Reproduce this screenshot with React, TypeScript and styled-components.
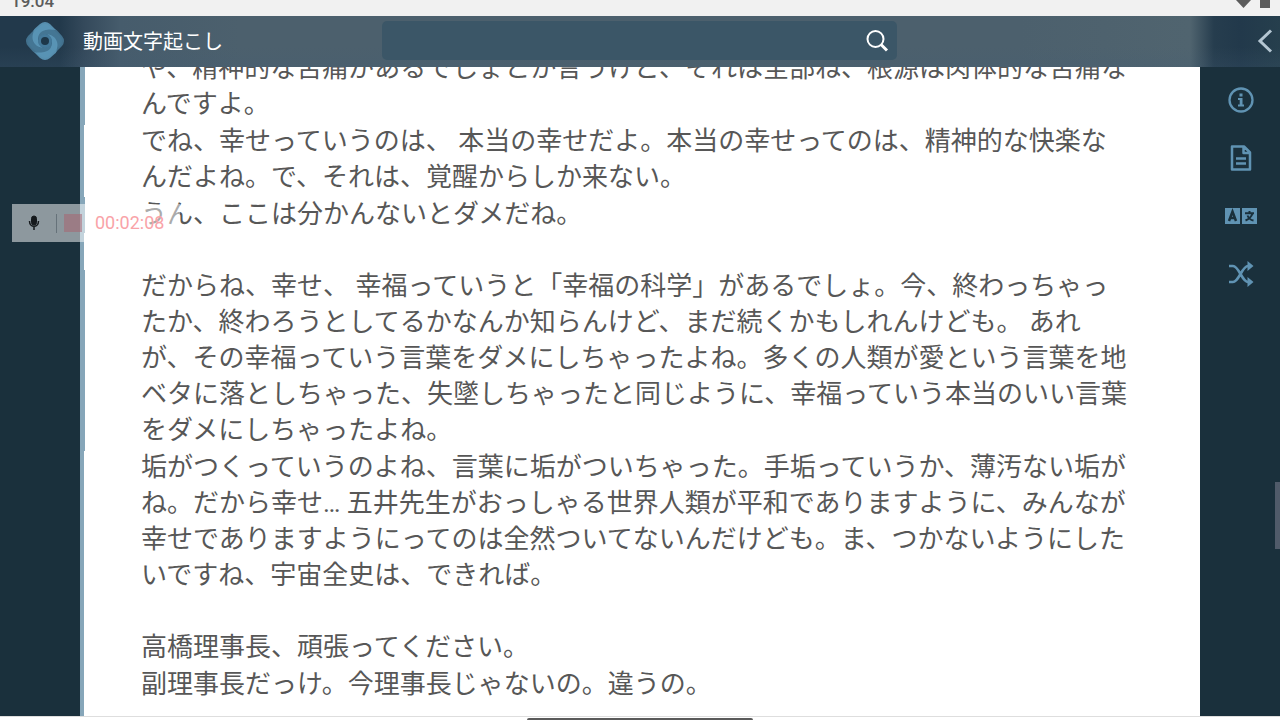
import React from "react";
import styled, { createGlobalStyle } from "styled-components";

const jp = '"Noto Sans CJK JP", "Noto Sans", sans-serif';

const GlobalStyle = createGlobalStyle`
  *, *::before, *::after { box-sizing: border-box; }
  body { margin: 0; background: #1a303c; font-family: ${jp}; }
`;

const Screen = styled.div`
  position: relative;
  display: flex;
  flex-direction: column;
  height: 100vh;
  overflow: hidden;
`;

const StatusBar = styled.div`
  display: flex;
  justify-content: space-between;
  align-items: flex-end;
  flex: none;
  height: 16px;
  padding: 0 10px 8px 11px;
  background: #f1f1f1;
  color: #5c5c5c;
  font: 500 17px/18px Roboto, sans-serif;
  overflow: hidden;
`;

const Clock = styled.time`
  margin-bottom: -2px;
`;

const StatusIcons = styled.svg`
  display: block;
  width: 36px;
  height: 8px;
`;

const Header = styled.header`
  display: grid;
  grid-template-columns: 382px minmax(0, 515px) 1fr;
  align-items: center;
  flex: none;
  height: 51px;
  padding-bottom: 2px;
  background:
    linear-gradient(180deg, transparent 60%, rgba(66, 92, 116, 0.2)),
    linear-gradient(90deg, #22394b 0, #22394b 60px, #34495b 84px, #465c6c 120px, #4c606d 240px,
      #4c606d calc(100% - 260px), #50646f calc(100% - 90px), #263d4e calc(100% - 66px), #22394b calc(100% - 40px), #263f4d 100%);
`;

const Brand = styled.a`
  display: flex;
  align-items: center;
  gap: 18px;
  padding-left: 25px;
  color: #fff;
  font-size: 20px;
  line-height: 30px;
  text-decoration: none;
`;

const Logo = styled.svg`
  width: 40px;
  height: 40px;
`;

const Search = styled.form`
  display: flex;
  align-items: center;
  height: 39px;
  padding-right: 8px;
  border-radius: 5px;
  background: #3b5667;
`;

const SearchInput = styled.input`
  flex: 1;
  min-width: 0;
  height: 100%;
  padding: 0 12px;
  border: 0;
  outline: 0;
  background: transparent;
  color: #fff;
  font: 18px ${jp};
`;

const IconButton = styled.button`
  display: grid;
  place-items: center;
  padding: 0;
  border: 0;
  background: transparent;
  color: ${(p) => p.color ?? "#6093b3"};
  cursor: pointer;
  svg { display: block; }
`;

const HeaderEnd = styled.div`
  display: flex;
  justify-content: flex-end;
  padding-right: 7px;
`;

const Body = styled.div`
  display: grid;
  grid-template-columns: 80px minmax(0, 1fr) 80px;
  flex: 1;
  min-height: 0;
  background: #1a303c;
`;

const Sheet = styled.main`
  display: flex;
  flex-direction: column;
  justify-content: flex-end;
  gap: 36px;
  grid-column: 2;
  padding: 0 56px 14px 61px;
  overflow: hidden;
  color: #575757;
  background:
    linear-gradient(#86a6b9, #86a6b9) 0 0 / 4px 100% no-repeat,
    linear-gradient(#86a6b9 58px, #fff 58px, #fff 130px, #86a6b9 130px, #86a6b9 166px,
      #fff 166px, #fff 203px, #86a6b9 203px, #86a6b9 384px, #fff 384px) 0 0 / 5px 100% no-repeat,
    #fff;
`;

const Passage = styled.section`
  display: flex;
  flex-direction: column;
  gap: 1px;
`;

const Paragraph = styled.p`
  margin: 0;
  font-family: Roboto, ${jp};
  font-size: 26px;
  line-height: 36px;
  white-space: pre-line;
`;

const Tools = styled.nav`
  position: relative;
  display: flex;
  flex-direction: column;
  align-items: center;
  gap: 26px;
  padding: 17px 0 0 2px;
`;

const ToolButton = styled(IconButton)`
  width: 36px;
  height: 32px;
`;

const ScrollThumb = styled.div`
  position: absolute;
  right: 0;
  top: 64%;
  width: 5px;
  height: 67px;
  background: #505b6a;
`;

const BottomBar = styled.div`
  display: flex;
  justify-content: center;
  align-items: flex-end;
  flex: none;
  height: 4px;
  border-top: 1px solid #dedede;
  background: #fff;
`;

const HomeHandle = styled.div`
  width: 226px;
  height: 2px;
  border-radius: 2px 2px 0 0;
  background: #5a5a5a;
`;

const Recorder = styled.div`
  position: absolute;
  left: 12px;
  top: 204px;
  display: flex;
  align-items: center;
  width: 168px;
  height: 38px;
  padding-left: 16px;
  background: rgba(255, 255, 255, 0.5);
`;

const Divider = styled.span`
  width: 1px;
  height: 19px;
  margin: 0 7px 0 16px;
  background: #66727a;
`;

const StopButton = styled.button`
  width: 18px;
  height: 18px;
  padding: 0;
  border: 0;
  background: rgba(170, 95, 108, 0.5);
`;

const Elapsed = styled.time`
  margin-left: 13px;
  color: #f9a3a8;
  font: 18px/24px Roboto, sans-serif;
`;

const passages = [
  [
    "や、精神的な苦痛があるでしょとか言うけど、それは全部ね、根源は肉体的な苦痛な\nんですよ。",
    "でね、幸せっていうのは、 本当の幸せだよ。本当の幸せってのは、精神的な快楽な\nんだよね。で、それは、覚醒からしか来ない。",
    "うん、ここは分かんないとダメだね。",
  ],
  [
    "だからね、幸せ、 幸福っていうと「幸福の科学」があるでしょ。今、終わっちゃっ\nたか、終わろうとしてるかなんか知らんけど、まだ続くかもしれんけども。 あれ\nが、その幸福っていう言葉をダメにしちゃったよね。多くの人類が愛という言葉を地\nベタに落としちゃった、失墜しちゃったと同じように、幸福っていう本当のいい言葉\nをダメにしちゃったよね。",
    "垢がつくっていうのよね、言葉に垢がついちゃった。手垢っていうか、薄汚ない垢が\nね。だから幸せ… 五井先生がおっしゃる世界人類が平和でありますように、みんなが\n幸せでありますようにってのは全然ついてないんだけども。ま、つかないようにした\nいですね、宇宙全史は、できれば。",
  ],
  ["高橋理事長、頑張ってください。", "副理事長だっけ。今理事長じゃないの。違うの。"],
];

const arms = [
  { angle: 90, fill: "#467896" },
  { angle: 270, fill: "#467896" },
  { angle: 0, fill: "#5c98b9" },
  { angle: 180, fill: "#5c98b9" },
];

export default function App() {
  return (
    <Screen>
      <GlobalStyle />
      <StatusBar>
        <Clock>19:04</Clock>
        <StatusIcons viewBox="0 0 36 8" fill="#5c5c5c" aria-hidden="true">
          <path d="M2 0h15L9.500 8zM26 0h10v8H26z" />
        </StatusIcons>
      </StatusBar>
      <Header>
        <Brand href="#">
          <Logo viewBox="0 0 40 40" aria-hidden="true">
            <rect x="6" y="6" width="28" height="28" rx="7" fill="#3a6885" transform="rotate(45 20 20)" />
            {arms.map(({ angle, fill }) => (
              <path
                key={angle}
                transform={`rotate(${angle} 20 20)`}
                d="M8 13 8.500 9.500Q9 8 10.500 7L15 3Q20-1 25 3L31 9C25 8 18 8 14.500 13C11.500 18 13 24 18 27C10 26 6 19 8 13Z"
                fill={fill}
                fillOpacity="0.9"
              />
            ))}
            <circle cx="20" cy="20" r="7" fill="#44799a" />
            <circle cx="20" cy="20" r="4" fill="#1d3749" />
          </Logo>
          動画文字起こし
        </Brand>
        <Search role="search" onSubmit={(e) => e.preventDefault()}>
          <SearchInput type="search" aria-label="検索" />
          <IconButton type="submit" aria-label="検索する" color="#fff">
            <svg width="24" height="24" viewBox="0 0 24 24" fill="none" stroke="currentColor">
              <circle cx="10.500" cy="10" r="8" strokeWidth="2" />
              <path d="m16 15.500 6 6" strokeWidth="3" />
            </svg>
          </IconButton>
        </Search>
        <HeaderEnd>
          <IconButton type="button" aria-label="戻る" color="#b4c6d2">
            <svg width="16" height="24" viewBox="0 0 16 24" fill="none" stroke="currentColor" strokeWidth="3">
              <path d="M14 1.500 3 12l11 10.500" />
            </svg>
          </IconButton>
        </HeaderEnd>
      </Header>
      <Body>
        <Sheet>
          {passages.map((paragraphs) => (
            <Passage key={paragraphs[0]}>
              {paragraphs.map((text) => (
                <Paragraph key={text}>{text}</Paragraph>
              ))}
            </Passage>
          ))}
        </Sheet>
        <Tools aria-label="ツール">
          <ToolButton type="button" aria-label="情報">
            <svg width="26" height="26" viewBox="0 0 26 26" fill="currentColor">
              <circle cx="13" cy="13" r="11.500" fill="none" stroke="currentColor" strokeWidth="2.300" />
              <path d="M11.500 6.500h3v3h-3zM10 11h4.500v6.500H16v2h-6v-2h1.700V13H10z" />
            </svg>
          </ToolButton>
          <ToolButton type="button" aria-label="文書">
            <svg width="22" height="26" viewBox="0 0 22 26" fill="none" stroke="currentColor" strokeWidth="2.500" strokeLinejoin="round">
              <path d="M2 1.500h12l6 6v17H2zM13.500 1.500v6.500H20M6 13.500h10M6 18.500h10" />
            </svg>
          </ToolButton>
          <ToolButton type="button" aria-label="翻訳">
            <svg width="34" height="18" viewBox="0 0 34 18">
              <path fill="currentColor" d="M1 1h15v16H1zM18 1h15v16H18z" />
              <g fill="none" stroke="#1a303c" strokeWidth="2">
                <path d="M5 14 8.500 4.500 12 14M6 11h5" strokeWidth="2.500" />
                <path d="M21 6.200h9M25.500 4V6M28.500 6.500c-1 3-3.500 5.500-7 7M23.500 8.500c1 2.500 3 4.500 6 5" />
              </g>
            </svg>
          </ToolButton>
          <ToolButton type="button" aria-label="シャッフル">
            <svg width="26" height="26" viewBox="0 0 26 26" fill="none" stroke="currentColor" strokeWidth="2.600">
              <path d="M1 5h4c6 0 9 16 15 16h1M1 21h4c6 0 9-16 15-16h1" />
              <path d="m19.500 0 6 5-6 5zM19.500 16l6 5-6 5z" fill="currentColor" stroke="none" />
            </svg>
          </ToolButton>
          <ScrollThumb />
        </Tools>
      </Body>
      <BottomBar>
        <HomeHandle />
      </BottomBar>
      <Recorder>
        <svg width="12" height="16" viewBox="0 0 12 16" fill="none" stroke="#15191c" aria-hidden="true">
          <rect x="3.500" y="1" width="5" height="9" rx="2.500" fill="#15191c" />
          <path d="M1.500 6c0 7 9 7 9 0M6 12v3" strokeWidth="1.500" />
        </svg>
        <Divider />
        <StopButton type="button" aria-label="録画を停止" />
        <Elapsed>00:02:08</Elapsed>
      </Recorder>
    </Screen>
  );
}
